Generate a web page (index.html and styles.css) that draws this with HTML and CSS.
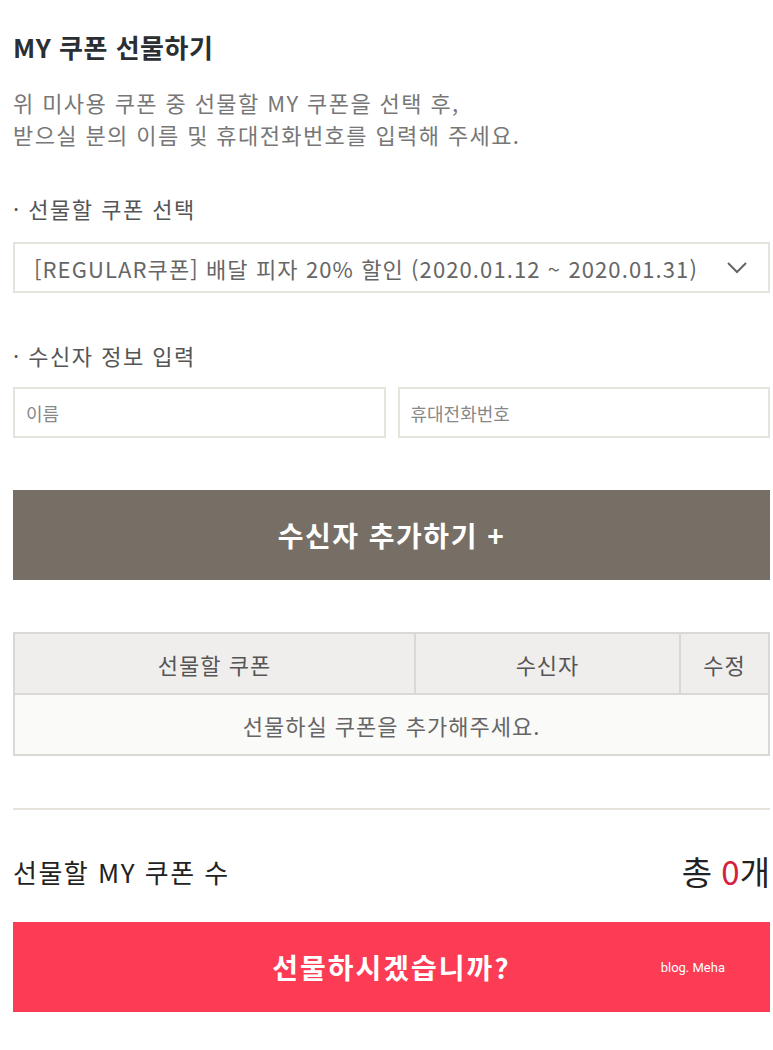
FILE: index.html
```html
<!DOCTYPE html>
<html lang="ko">
<head>
  <meta charset="UTF-8">
  <meta name="viewport" content="width=device-width">
  <title>MY 쿠폰 선물하기</title>
  <link rel="stylesheet" href="styles.css">
</head>
<body>

<h2 class=title>MY 쿠폰 선물하기</h2>
<p class=desc>위 미사용 쿠폰 중 선물할 MY 쿠폰을 선택 후,<br>
받으실 분의 이름 및 휴대전화번호를 입력해 주세요.</p>

<h3 class=label>· 선물할 쿠폰 선택</h3>
<div class=select>
  <span>[REGULAR쿠폰] 배달 피자 20% 할인 (2020.01.12 ~ 2020.01.31)</span>
  <svg class=chev width="22" height="14" viewBox="0 0 22 14">
    <path d="M2 2 L11 11 L20 2" fill="none" stroke="#666" stroke-width="2"/>
  </svg>
</div>

<h3 class="label second">· 수신자 정보 입력</h3>
<div class=inputs>
  <input type=text placeholder='이름'>
  <input type=text placeholder='휴대전화번호'>
</div>

<button class="btn gray">수신자 추가하기 +</button>

<table class=list>
  <tr>
    <th class=c1>선물할 쿠폰</th>
    <th class=c2>수신자</th>
    <th class=c3>수정</th>
  </tr>
  <tr>
    <td colspan=3>선물하실 쿠폰을 추가해주세요.</td>
  </tr>
</table>

<hr class=line>

<div class=total>
  <span>선물할 MY 쿠폰 수</span>
  <span class=count>총 <b>0</b>개</span>
</div>

<button class="btn red">선물하시겠습니까?<span class=mark>blog. Meha</span></button>

</body>
</html>
```

FILE: styles.css
```css
body {
  margin: 0;
  padding: 20px 3px 0 13px;
  font-family: "Noto Sans CJK KR", "Noto Sans", sans-serif;
  color: #333;
  background: #fff;
}
.title {
  margin: 11px 0 0;
  font-size: 26px;
  font-weight: bold;
  line-height: 32px;
  letter-spacing: 0.5px;
  color: #2b2f33;
}
.desc {
  margin: 23px 0 0;
  font-size: 22px;
  line-height: 32px;
  letter-spacing: 1.4px;
  color: #777;
}
.label {
  margin: 42px 0 0;
  font-size: 22px;
  font-weight: normal;
  line-height: 32px;
  letter-spacing: 1.5px;
  color: #555;
}
.select {
  margin-top: 18px;
  height: 51px;
  box-sizing: border-box;
  border: 2px solid #e6e3dc;
  display: flex;
  align-items: center;
  justify-content: space-between;
  padding: 0 20px 0 19px;
  font-size: 22px;
  letter-spacing: 1.1px;
  color: #666;
}
.second { margin-top: 46px; }
.inputs {
  margin-top: 16px;
  display: flex;
  gap: 12px;
}
.inputs input {
  flex: 1;
  min-width: 0;
  height: 51px;
  box-sizing: border-box;
  border: 2px solid #e6e3dc;
  padding: 0 11px;
  font: 18px "Noto Sans CJK KR", sans-serif;
  color: #555;
  outline: none;
}
.inputs input::placeholder { color: #888; }
.btn {
  display: block;
  width: 100%;
  height: 90px;
  border: 0;
  color: #fff;
  font: bold 28px "Noto Sans CJK KR", sans-serif;
  letter-spacing: 1.5px;
  cursor: pointer;
}
.gray {
  margin-top: 52px;
  background: #776f66;
}
.list {
  margin-top: 52px;
  width: 100%;
  border-collapse: collapse;
  font-size: 22px;
  letter-spacing: 1px;
  color: #666;
}
.list th, .list td {
  border: 2px solid #dad8d4;
  height: 59px;
  text-align: center;
  font-weight: normal;
  padding: 0;
}
.list th { background: #efeeec; color: #555; }
.c1 { width: 399px; }
.c2 { width: 263px; }
.list td { background: #fafaf9; }
.line {
  margin: 52px 0 0;
  border: 0;
  border-top: 2px solid #e6e3dc;
}
.total {
  margin-top: 37px;
  display: flex;
  justify-content: space-between;
  align-items: center;
  font-size: 26px;
  letter-spacing: 1.5px;
  color: #222;
}
.count { font-size: 33px; letter-spacing: 0; }
.count b { font-weight: normal; color: #d4233f; }
.red {
  margin-top: 27px;
  background: #fc3b55;
  letter-spacing: 2px;
  position: relative;
}
.mark {
  position: absolute;
  right: 45px;
  top: 38px;
  font: 13px "Roboto", sans-serif;
  letter-spacing: 0;
}
```
